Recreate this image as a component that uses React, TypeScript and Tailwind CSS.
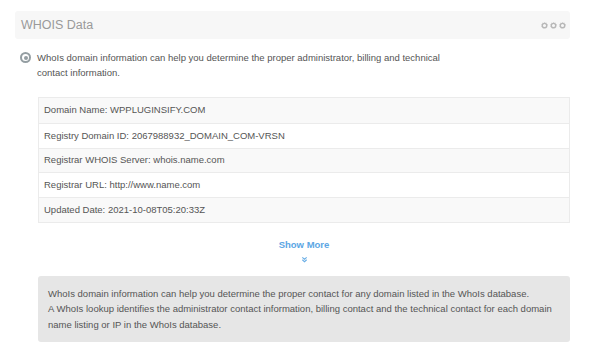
const rows = [
  'Domain Name: WPPLUGINSIFY.COM',
  'Registry Domain ID: 2067988932_DOMAIN_COM-VRSN',
  'Registrar WHOIS Server: whois.name.com',
  'Registrar URL: http://www.name.com',
  'Updated Date: 2021-10-08T05:20:33Z',
]

function Cog() {
  return (
    <svg width="7" height="7" viewBox="0 0 8 8" className="block">
      <circle cx="4" cy="4" r="2.5" fill="none" stroke="#b8b8b8" strokeWidth="1.5" />
      <circle cx="4" cy="4" r="3.5" fill="none" stroke="#b8b8b8" strokeWidth="0.8" strokeDasharray="1 1.2" />
    </svg>
  )
}

export default function App() {
  return (
    <div
      className="min-h-screen bg-white pl-[15px] pt-[11px]"
      style={{ fontFamily: '"Liberation Sans", Arial, sans-serif' }}
    >
      <div className="w-[555px]">
        <div className="flex h-[28px] items-center justify-between rounded-[3px] bg-[#f7f7f7] pl-[6px] pr-[4px]">
          <span className="text-[12.5px] text-[#9a9a9a]">WHOIS Data</span>
          <div className="flex gap-[2px]">
            <Cog />
            <Cog />
            <Cog />
          </div>
        </div>

        <div className="mt-[11px] flex pl-[5px]">
          <div className="mt-[2px] flex h-[11px] w-[11px] shrink-0 items-center justify-center rounded-full bg-[#949ea2]">
            <div className="flex h-[7px] w-[7px] items-center justify-center rounded-full bg-white">
              <div className="h-[4px] w-[4px] rounded-full bg-[#949ea2]" />
            </div>
          </div>
          <p className="ml-[6px] w-[420px] text-[9.5px] leading-[15px] text-[#555]">
            WhoIs domain information can help you determine the proper administrator, billing and technical contact
            information.
          </p>
        </div>

        <div className="ml-[23px] mt-[17px] border border-[#ebebeb]">
          {rows.map((r, i) => (
            <div
              key={r}
              className={`flex h-[24.8px] items-center border-[#ebebeb] pl-[5px] text-[9.5px] text-[#555] ${
                i > 0 ? 'border-t' : ''
              } ${i % 2 === 0 ? 'bg-[#f9f9f9]' : 'bg-white'}`}
            >
              {r}
            </div>
          ))}
        </div>

        <div className="ml-[23px] mt-[16px] flex flex-col items-center">
          <span className="text-[9.5px] font-bold leading-[12px] text-[#5ba6e4]">Show More</span>
          <svg width="7" height="7" viewBox="0 0 8 8" className="mt-[5.5px]">
            <path d="M1.5 1.5 4 3.7 6.5 1.5M1.5 4.3 4 6.5 6.5 4.3" fill="none" stroke="#6aaee6" strokeWidth="1.2" />
          </svg>
        </div>

        <div className="ml-[23px] mt-[12.5px] rounded-[3px] bg-[#e6e6e6] px-[10px] pb-[10px] pt-[10px] text-[9.5px] leading-[15.5px] text-[#555]">
          <p>WhoIs domain information can help you determine the proper contact for any domain listed in the WhoIs database.</p>
          <p>
            A WhoIs lookup identifies the administrator contact information, billing contact and the technical contact for
            each domain name listing or IP in the WhoIs database.
          </p>
        </div>
      </div>
    </div>
  )
}
